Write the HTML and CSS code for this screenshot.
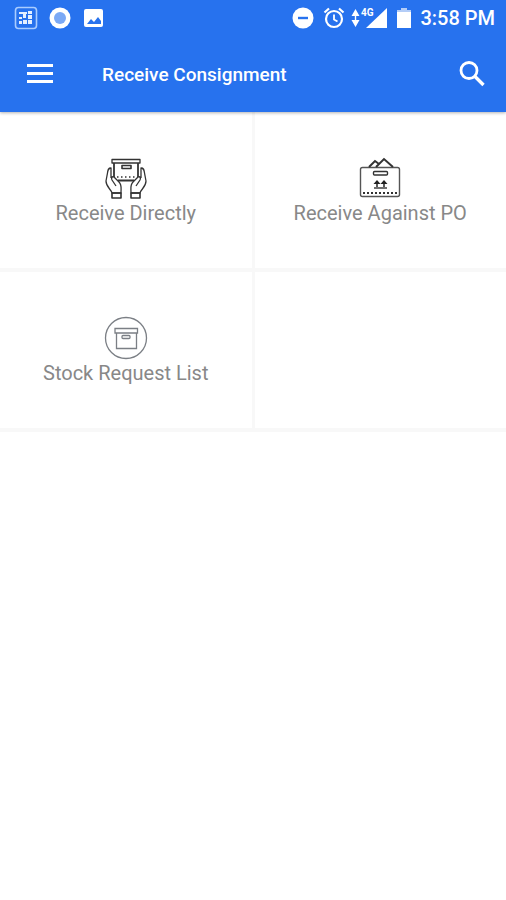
FILE: index.html
```html
<!DOCTYPE html>
<html lang="en">
<head>
<meta charset="utf-8">
<meta name="viewport" content="width=device-width, initial-scale=1">
<title>Receive Consignment</title>
<link rel="stylesheet" href="styles.css">
</head>

<body>

	<!--header-->
	<header class="header">
		<div class="statusBar">
			<div class="notices">
				<svg width="24" height="24" viewBox="0 0 24 24">
					<rect x="1.5" y="1.5" width="21" height="21" rx="3" fill="none" stroke="#a9ccff" stroke-width="1.6"/>
					<path d="M5 6h8v2H5zM9 8h3v4H9zM14 5h4v3h-4zM14 9h4v4h-4zM5 11h3v2H5zM5 15h3v3H5zM9 14h4v4H9zM14 14h4v4h-4z" fill="#e4efff"/>
				</svg>
				<svg width="24" height="24" viewBox="0 0 24 24">
					<circle cx="12" cy="12" r="10.5" fill="#fff"/>
					<circle cx="12" cy="12" r="6" fill="#7ba9f5"/>
				</svg>
				<svg width="24" height="24" viewBox="0 0 24 24">
					<rect x="2" y="3" width="19" height="18" rx="2" fill="#fff"/>
					<path d="M5 18l4-5 3 3 4-5 3 4v3z" fill="#2772ee"/>
				</svg>
			</div>
			<div class="signals">
				<svg width="22" height="24" viewBox="0 0 22 24">
					<circle cx="11" cy="12" r="10.5" fill="#fff"/>
					<path d="M6 12h10" stroke="#2772ee" stroke-width="2.4"/>
				</svg>
				<svg width="22" height="24" viewBox="0 0 22 24" fill="none" stroke="#fff">
					<circle cx="11" cy="13" r="8" stroke-width="2.2"/>
					<path d="M1.5 6.500l4.500-4M20.500 6.500l-4.500-4" stroke-width="2.2"/>
					<path d="M11 8.500v5l3.500 2" stroke-width="1.8"/>
				</svg>
				<svg class="cell4g" width="38" height="24" viewBox="0 0 38 24" fill="#fff">
					<path d="M5.500 3L9.500 10h-8zM5.500 21L1.500 14h8z"/>
					<path d="M4.800 8h1.400v8H4.800z"/>
					<path d="M37 2v20H16z"/>
					<path d="M10 1h15v10H10z" fill="#2772ee"/>
					<text class="net" x="11" y="10">4G</text>
				</svg>
				<svg width="14" height="24" viewBox="0 0 14 24">
					<path d="M0 4h14v18H0zM4 2h6v2H4z" fill="#fff"/>
					<path d="M0 4h14v2H0zM4 2h6v2H4z" fill="#b4cdf7"/>
				</svg>
				<span class="clock">3:58 PM</span>
			</div>
		</div>
		<div class="toolBar">
			<button class="iconBtn" type="button" aria-label="Menu">
				<svg width="28" height="28" viewBox="0 0 28 28">
					<path d="M1 5.500h26M1 13.500h26M1 21.500h26" stroke="#fff" stroke-width="3"/>
				</svg>
			</button>
			<h1 class="title">Receive Consignment</h1>
			<button class="iconBtn" type="button" aria-label="Search">
				<svg width="28" height="28" viewBox="0 0 28 28" fill="none" stroke="#fff">
					<circle cx="11" cy="10.500" r="8" stroke-width="2.8"/>
					<path d="M16.500 16l9 9" stroke-width="3.4"/>
				</svg>
			</button>
		</div>
	</header>
	<!--end header-->

	<!--menu grid-->
	<main class="menuGrid">
		<a class="menuItem" href="#">
			<svg width="44" height="44" viewBox="0 0 44 44" fill="none" stroke="#333" stroke-width="1.3" stroke-linejoin="round">
				<path d="M8 3.500h28v3.500H8z"/>
				<path d="M10 7v14M34 7v14M14 24.500h16" stroke-width="1.8"/>
				<path d="M18 9.500h9v3h-9z" stroke-width="1.6"/>
				<path d="M13 21h18" stroke-dasharray="1.5 2.5"/>
				<!--left hand-->
				<path d="M7 22V12c-3 0-3 2-3.500 5L2 25c0 6 5 8 6 12h9c0-6 1-8-2-11l-5-5c-2-1-3 1-2 3l4 6"/>
				<!--right hand-->
				<path d="M37 22V12c3 0 3 2 3.500 5L42 25c0 6-5 8-6 12h-9c0-6-1-8 2-11l5-5c2-1 3 1 2 3l-4 6"/>
				<path d="M8 37h9v5H8zM27 37h9v5h-9z" stroke-width="1.6"/>
			</svg>
			<span class="menuLabel">Receive Directly</span>
		</a>
		<a class="menuItem" href="#">
			<svg width="44" height="44" viewBox="0 0 44 44" fill="none" stroke="#333" stroke-width="1.4">
				<rect x="2.500" y="11.500" width="39" height="29" rx="2" stroke="#555"/>
				<path d="M11 11l6-6 4 3M18 11l8-8 9 8" stroke-width="2"/>
				<rect x="15.500" y="15.500" width="14" height="3.500" rx="1"/>
				<path d="M19 31v-5M26 31v-5" stroke-width="1.6"/>
				<path d="M19 24l-3.500 4h7zM26 24l-3.500 4h7z" fill="#222" stroke="none"/>
				<path d="M16 32h13"/>
				<path d="M5 37h34" stroke-width="2" stroke-dasharray="2 2"/>
			</svg>
			<span class="menuLabel">Receive Against PO</span>
		</a>
		<a class="menuItem" href="#">
			<svg width="44" height="44" viewBox="0 0 44 44" fill="none" stroke="#7b7f85" stroke-width="1.3">
				<circle cx="22" cy="22" r="20.5"/>
				<path d="M11 12.500h22.500v4.500H11zM12.500 17v15.500h20V17"/>
				<rect x="18" y="19.500" width="8" height="3" rx="1"/>
			</svg>
			<span class="menuLabel">Stock Request List</span>
		</a>
		<div class="menuItem"></div>
	</main>
	<!--end menu grid-->

</body>
</html>
```

FILE: styles.css
```css
body {
	margin: 0;
	background-color: white;
	font-family: Roboto, Arial, sans-serif;
}

.header {
	position: relative;
	background-color: #2772EE;
	color: white;
	box-shadow: 0 1px 3px rgba(0, 0, 0, 0.3);
}

.statusBar {
	display: flex;
	justify-content: space-between;
	align-items: center;
	height: 36px;
	padding: 0 11px 0 14px;
}

.notices {
	display: flex;
	gap: 10px;
}

.signals {
	display: flex;
	align-items: center;
	gap: 9px;
}

.cell4g {
	margin-left: -4px;
}

.net {
	font-size: 10px;
	font-weight: bold;
}

.clock {
	font-size: 20px;
	font-weight: 500;
}

.toolBar {
	display: flex;
	align-items: center;
	height: 76px;
	padding: 0 20px 0 26px;
}

.iconBtn {
	display: flex;
	padding: 0;
	border: 0;
	background: none;
	cursor: pointer;
}

.title {
	flex: 1;
	margin: 0;
	padding-left: 48px;
	font-size: 19px;
	font-weight: 500;
}

.menuGrid {
	display: grid;
	grid-template-columns: 1fr 1fr;
	gap: 4px 3px;
	background-color: #F8F8F8;
	border-bottom: 4px solid #F8F8F8;
}

.menuItem {
	display: flex;
	flex-direction: column;
	align-items: center;
	padding: 44px 0 42px;
	background-color: white;
	color: #888888;
	text-decoration: none;
}

.menuLabel {
	font-size: 20px;
	line-height: 26px;
}
```
